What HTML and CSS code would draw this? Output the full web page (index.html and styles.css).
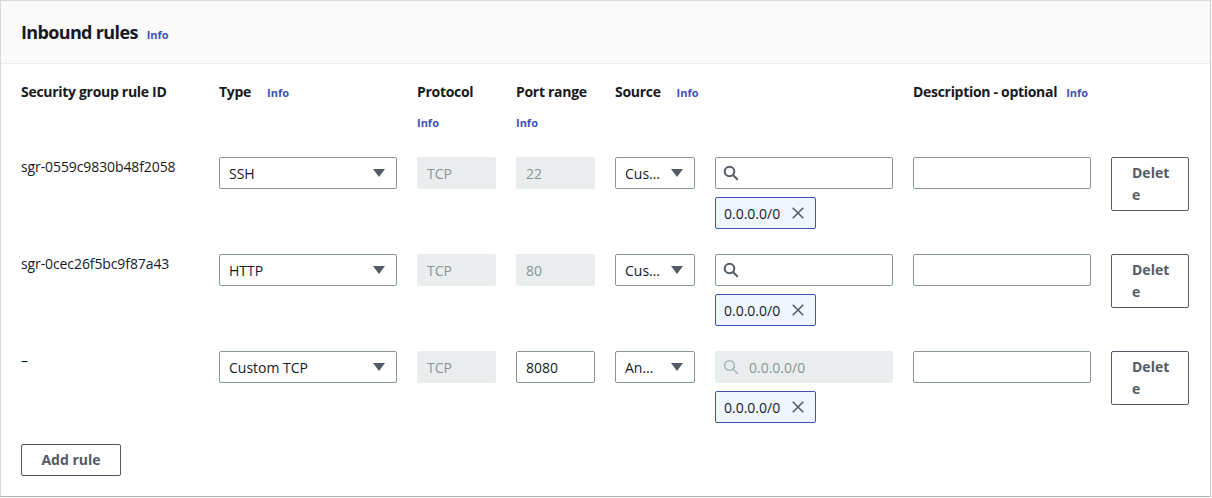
FILE: index.html
```html
<!DOCTYPE html>
<html lang="en">
<head>
<meta charset="utf-8">
<title>Inbound rules</title>
<link rel="stylesheet" href="styles.css">
</head>
<body>
<section class="panel">
  <header class="panel-head">
    <h2 class="title">Inbound rules</h2>
    <a class="info info-title" href="#">Info</a>
  </header>
  <div class="panel-body">
    <div class="grid labels">
      <div class="label"><span>Security group rule ID</span></div>
      <div class="label"><span>Type</span><a class="info" href="#">Info</a></div>
      <div class="label stack"><span>Protocol</span><a class="info" href="#">Info</a></div>
      <div class="label stack"><span>Port range</span><a class="info" href="#">Info</a></div>
      <div class="label span2"><span>Source</span><a class="info" href="#">Info</a></div>
      <div class="label tight"><span>Description - optional</span><a class="info" href="#">Info</a></div>
      <div class="label"></div>
    </div>

    <div class="grid rule">
      <div class="rule-id">sgr-0559c9830b48f2058</div>
      <div class="field select"><span class="val">SSH</span><span class="caret"></span></div>
      <div class="field disabled">TCP</div>
      <div class="field disabled">22</div>
      <div class="field select"><span class="val">Cus…</span><span class="caret"></span></div>
      <div class="source">
        <div class="field search">
          <svg class="mag" viewBox="0 0 16 16" width="16" height="16"><circle cx="6.5" cy="6.5" r="4.8" fill="none" stroke="currentColor" stroke-width="2"/><path d="M10 10l4.2 4.2" stroke="currentColor" stroke-width="2" stroke-linecap="round"/></svg>
        </div>
        <div class="token"><span>0.0.0.0/0</span><svg class="x" viewBox="0 0 16 16" width="14" height="14"><path d="M2 2l12 12M14 2L2 14" stroke="currentColor" stroke-width="1.8" fill="none"/></svg></div>
      </div>
      <div class="field"></div>
      <div><button class="btn del">Delete</button></div>
    </div>

    <div class="grid rule">
      <div class="rule-id">sgr-0cec26f5bc9f87a43</div>
      <div class="field select"><span class="val">HTTP</span><span class="caret"></span></div>
      <div class="field disabled">TCP</div>
      <div class="field disabled">80</div>
      <div class="field select"><span class="val">Cus…</span><span class="caret"></span></div>
      <div class="source">
        <div class="field search">
          <svg class="mag" viewBox="0 0 16 16" width="16" height="16"><circle cx="6.5" cy="6.5" r="4.8" fill="none" stroke="currentColor" stroke-width="2"/><path d="M10 10l4.2 4.2" stroke="currentColor" stroke-width="2" stroke-linecap="round"/></svg>
        </div>
        <div class="token"><span>0.0.0.0/0</span><svg class="x" viewBox="0 0 16 16" width="14" height="14"><path d="M2 2l12 12M14 2L2 14" stroke="currentColor" stroke-width="1.8" fill="none"/></svg></div>
      </div>
      <div class="field"></div>
      <div><button class="btn del">Delete</button></div>
    </div>

    <div class="grid rule">
      <div class="rule-id">–</div>
      <div class="field select"><span class="val">Custom TCP</span><span class="caret"></span></div>
      <div class="field disabled">TCP</div>
      <div class="field">8080</div>
      <div class="field select"><span class="val">An…</span><span class="caret"></span></div>
      <div class="source">
        <div class="field search disabled">
          <svg class="mag" viewBox="0 0 16 16" width="16" height="16"><circle cx="6.5" cy="6.5" r="4.8" fill="none" stroke="currentColor" stroke-width="1.6"/><path d="M10 10l4.2 4.2" stroke="currentColor" stroke-width="1.6" stroke-linecap="round"/></svg>
          <span class="ph">0.0.0.0/0</span>
        </div>
        <div class="token"><span>0.0.0.0/0</span><svg class="x" viewBox="0 0 16 16" width="14" height="14"><path d="M2 2l12 12M14 2L2 14" stroke="currentColor" stroke-width="1.8" fill="none"/></svg></div>
      </div>
      <div class="field"></div>
      <div><button class="btn del">Delete</button></div>
    </div>

    <div class="actions">
      <button class="btn add">Add rule</button>
    </div>
  </div>
</section>
</body>
</html>
```

FILE: styles.css
```css
* { box-sizing: border-box; }
body {
  margin: 0;
  font-family: "Open Sans", "Noto Sans", sans-serif;
  font-size: 14px;
  color: #16191f;
  background: #fff;
}
.panel {
  width: 1211px;
  height: 497px;
  border: 1px solid #d5dbdb;
  border-right-color: #c6cccc;
  border-bottom-color: #aab7b8;
  background: #fff;
}
.panel-head {
  height: 63px;
  background: #fafafa;
  border-bottom: 1px solid #eaeded;
  display: flex;
  align-items: center;
  padding: 0 20px;
  gap: 9px;
}
.title {
  margin: 0;
  font-size: 18px;
  font-weight: 700;
  line-height: 22px;
  letter-spacing: -0.65px;
}
.info {
  font-size: 11px;
  font-weight: 700;
  color: #3f51b5;
  text-decoration: none;
  letter-spacing: 0;
}
.info-title { margin-top: 4px; }
.panel-body {
  padding: 17px 20px 0 20px;
}
.grid {
  display: grid;
  grid-template-columns: 178px 178px 79px 79px 80px 178px 178px 78px;
  column-gap: 20px;
}
.label {
  display: flex;
  flex-wrap: nowrap;
  white-space: nowrap;
  align-items: baseline;
  column-gap: 16px;
  line-height: 22px;
  font-weight: 700;
  letter-spacing: -0.3px;
}
.label.tight { column-gap: 9px; }
.label.stack {
  flex-direction: column;
  align-items: flex-start;
  row-gap: 9px;
}
.label.span2 { grid-column: span 2; }
.rule {
  margin-top: 23px;
  min-height: 72px;
}
.rule + .rule { margin-top: 25px; }
.rule-id {
  line-height: 20px;
  white-space: nowrap;
  letter-spacing: -0.1px;
}
.field {
  height: 32px;
  border: 1px solid #879596;
  border-radius: 2px;
  display: flex;
  align-items: center;
  padding: 0 9px;
  white-space: nowrap;
  overflow: hidden;
  background: #fff;
}
.field.disabled {
  background: #eaeded;
  border-color: #eaeded;
  color: #879596;
}
.select { justify-content: space-between; padding-right: 11px; }
.val { overflow: hidden; }
.caret {
  width: 0; height: 0;
  border-left: 6px solid transparent;
  border-right: 6px solid transparent;
  border-top: 8px solid #545b64;
  flex: none;
}
.source {
  display: flex;
  flex-direction: column;
  align-items: flex-start;
  gap: 8px;
}
.source .field { width: 100%; }
.search { padding-left: 7px; gap: 10px; color: #545b64; }
.search.disabled { color: #aab7b8; }
.mag { flex: none; }
.ph { color: #879596; }
.token {
  height: 32px;
  width: 101px;
  display: flex;
  align-items: center;
  justify-content: space-between;
  padding: 0 10px 0 8px;
  border: 1px solid #3f51b5;
  border-radius: 2px;
  background: #f0f6ff;
  color: #16191f;
}
.x { color: #545b64; }
.btn {
  font-family: inherit;
  font-size: 14px;
  font-weight: 700;
  color: #545b64;
  background: #fff;
  border: 1px solid #545b64;
  border-radius: 2px;
  line-height: 22px;
  cursor: pointer;
}
.del {
  width: 78px;
  padding: 4px 14px 4px 20px;
  text-align: left;
  word-break: break-all;
}
.actions { margin-top: 21px; }
.add {
  width: 100px;
  height: 32px;
  padding: 0;
  text-align: center;
}
```
